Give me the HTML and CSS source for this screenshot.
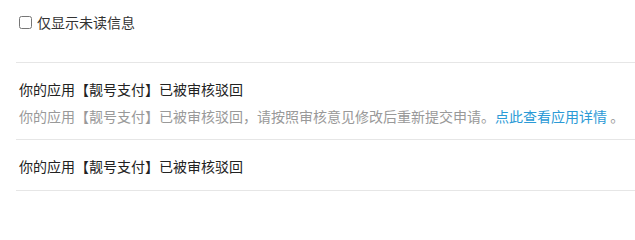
FILE: index.html
```html
<!DOCTYPE html>
<html lang="zh-CN">
<head>
<meta charset="utf-8">
<title>消息</title>
<link rel="stylesheet" href="styles.css">
</head>
<body>
<div class="page">
  <label class="filter">
    <input type="checkbox" class="filter-box">
    <span class="filter-text">仅显示未读信息</span>
  </label>
  <ul class="msg-list">
    <li class="msg">
      <div class="msg-title">你的应用【靓号支付】已被审核驳回</div>
      <div class="msg-desc">你的应用【靓号支付】已被审核驳回，请按照审核意见修改后重新提交申请。<a class="msg-link" href="#">点此查看应用详情</a> 。</div>
    </li>
    <li class="msg">
      <div class="msg-title">你的应用【靓号支付】已被审核驳回</div>
    </li>
  </ul>
</div>
</body>
</html>
```

FILE: styles.css
```css
html, body {
  margin: 0;
  padding: 0;
  background: #fff;
}
body {
  font-family: "Microsoft YaHei", "Noto Sans CJK SC", "Noto Sans", sans-serif;
  font-size: 14px;
  color: #333;
}
.page {
  padding: 10px 0 0 16px;
}
.filter {
  display: flex;
  align-items: center;
  height: 24px;
  padding-left: 3px;
  margin-bottom: 28px;
}
.filter-box {
  width: 13px;
  height: 13px;
  margin: 0 5px 0 0;
}
.filter-text {
  line-height: 24px;
  color: #333;
}
.msg-list {
  list-style: none;
  margin: 0;
  padding: 0;
  border-bottom: 1px solid #e6e6e6;
}
.msg {
  border-top: 1px solid #e6e6e6;
  padding: 14px 0 12px 3px;
}
.msg-title {
  line-height: 24px;
  color: #222;
}
.msg-desc {
  line-height: 26px;
  margin: 2px 0 -2px;
  color: #999;
}
.msg-link {
  color: #2b9ad6;
  text-decoration: none;
}
```
